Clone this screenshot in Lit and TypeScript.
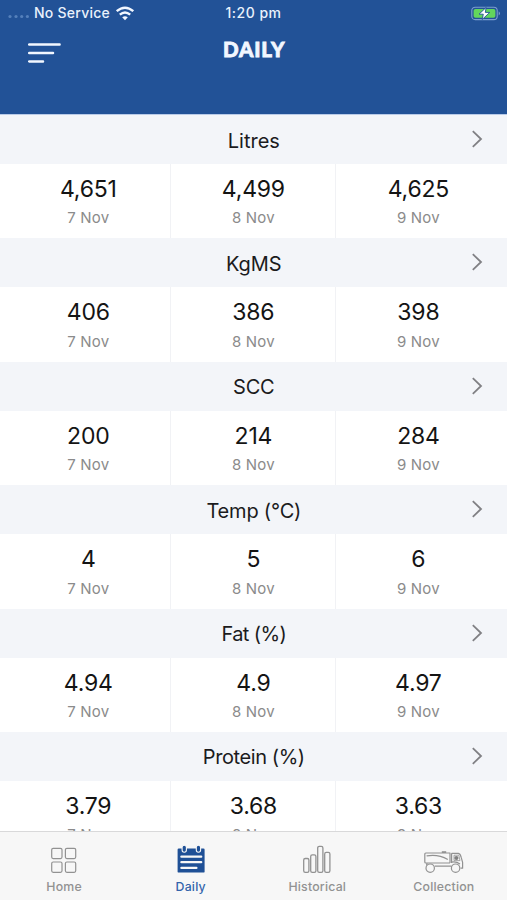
import { LitElement, html, css, svg } from "lit";
import { customElement, property } from "lit/decorators.js";
import { classMap } from "lit/directives/class-map.js";
import { styleMap } from "lit/directives/style-map.js";

interface Metric {
  name: string;
  tracking: number;
  values: string[];
}

const DAYS = ["7 Nov", "8 Nov", "9 Nov"];

const METRICS: Metric[] = [
  { name: "Litres", tracking: 0, values: ["4,651", "4,499", "4,625"] },
  { name: "KgMS", tracking: 0, values: ["406", "386", "398"] },
  { name: "SCC", tracking: -0.2, values: ["200", "214", "284"] },
  { name: "Temp (°C)", tracking: -0.2, values: ["4", "5", "6"] },
  { name: "Fat (%)", tracking: -0.6, values: ["4.94", "4.9", "4.97"] },
  { name: "Protein (%)", tracking: -0.42, values: ["3.79", "3.68", "3.63"] },
];

const homeIcon = svg`<g fill="none" stroke="#929292" stroke-width="1.2">
  <rect x="9.7" y="4.3" width="10.3" height="10.3" rx="1.5"/>
  <rect x="23.4" y="4.3" width="10.3" height="10.3" rx="1.5"/>
  <rect x="9.7" y="18" width="10.3" height="10.3" rx="1.5"/>
  <rect x="23.4" y="18" width="10.3" height="10.3" rx="1.5"/></g>`;

const dailyIcon = svg`<rect x="8.6" y="4.6" width="27" height="24" rx="1.2" fill="#1f5096"/>
  <g stroke="#f7f7f7" stroke-width="2.3" stroke-linecap="round">
  <path d="M12.4 12.7H32.2M12.4 18.2H32.2M12.4 23.9H27.4"/></g>
  <g fill="#1f5096" stroke="#f7f7f7" stroke-width="1.1">
  <rect x="13.1" y="1.2" width="4.3" height="7" rx="2.1"/>
  <rect x="27.3" y="1.2" width="4.3" height="7" rx="2.1"/></g>`;

const historicalIcon = svg`<g fill="none" stroke="#929292" stroke-width="1.3">
  <rect x="8.7" y="14.5" width="5.2" height="13.8" rx="1.6"/>
  <rect x="15.7" y="10.8" width="5.2" height="17.5" rx="1.6"/>
  <rect x="22.7" y="2.3" width="5.2" height="26" rx="1.6"/>
  <rect x="29.7" y="8.3" width="5.2" height="20" rx="1.6"/></g>`;

const collectionIcon = svg`<g fill="none" stroke="#929292" stroke-width="1.2" stroke-linejoin="round">
  <path d="M28 19H3.8Q2.8 19 2.8 18V10Q2.8 9 3.8 9H28V19"/>
  <path d="M29.6 9.3H36.4Q38.4 9.6 39.2 13.4L40.6 18.4V24.2H38.6"/>
  <path d="M29.6 9.3V19M5 19L4.6 21.4M12.8 22.2H29.4M29.6 18.2Q34 17.2 38 20"/>
  <path d="M4.6 11.9C11 10.7 18.4 11.2 25.8 15.4"/>
  <path d="M19.8 8.1H24.2" stroke-width="1.8"/>
  <path d="M32 11.2H36.8L38 16.6H32Z" stroke-width="0.8"/>
  <circle cx="34.4" cy="14" r="2.1" fill="#808080" stroke="none"/>
  <circle cx="8.2" cy="24.2" r="4.2"/>
  <circle cx="33.6" cy="24.2" r="4.2"/></g>`;

@customElement("status-bar")
export class StatusBar extends LitElement {
  static styles = css`
    :host { display: grid; grid-template-columns: 1fr auto 1fr; align-items: center; height: 26px;
      color: #e9f1fc; font-size: 14px; font-weight: 500; line-height: 26px; }
    .carrier { display: flex; align-items: center; padding-left: 8px; }
    .dots { width: 22px; height: 5px; margin: 7px 4px 0 0; }
    .wifi { width: 20px; height: 15px; margin-left: 5px; }
    .label { letter-spacing: 0.25px; }
    .time { letter-spacing: 0.5px; }
    .power { display: flex; justify-content: flex-end; padding-right: 6px; }
    .battery { width: 30px; height: 15px; }
  `;
  render() {
    return html`
      <div class="carrier">
        <svg class="dots" viewBox="0 0 22 5" fill="#5580bb">
          <circle cx="2" cy="2.5" r="1.6"/><circle cx="8" cy="2.5" r="1.6"/>
          <circle cx="13.7" cy="2.5" r="1.6"/><circle cx="19.4" cy="2.5" r="1.6"/>
        </svg>
        <span class="label">No Service</span>
        <svg class="wifi" viewBox="0 0 20 15" fill="none" stroke="#f2f7ff" stroke-width="2.4">
          <path d="M1.7 5.2Q10 -1.8 18.3 5.2M4.8 8.7Q10 4.2 15.2 8.7"/>
          <path d="M10 14.2L7.2 11.3Q10 9 12.8 11.3Z" fill="#f2f7ff" stroke="none"/>
        </svg>
      </div>
      <span class="time">1:20 pm</span>
      <div class="power">
        <svg class="battery" viewBox="0 0 30 15">
          <rect x="0.8" y="1.2" width="25.4" height="12.4" rx="3.4" fill="none" stroke="#7e9fce" stroke-width="1.1"/>
          <path d="M27.7 5.2Q30.2 7.4 27.7 9.6Z" fill="#7e9fce"/>
          <rect x="2.6" y="3" width="21.8" height="8.8" rx="1.8" fill="#63d65c"/>
          <path d="M15.2 1.4L8 8.2H12.3L11.2 13.5L18.8 6.4H14.3Z" fill="#fff" stroke="#225297" stroke-width="0.9"/>
        </svg>
      </div>`;
  }
}

@customElement("metric-section")
export class MetricSection extends LitElement {
  @property({ attribute: false }) metric!: Metric;
  static styles = css`
    :host { display: block; flex: none; height: 123.4px; }
    .head { display: grid; grid-template-columns: 1fr auto 1fr; align-items: center; height: 49px;
      background: #f3f5f9; }
    .name { grid-column: 2; font-size: 20px; line-height: 24px; padding: 2px 0 0 0.6px; color: #1b1b1d; }
    .chevron { justify-self: end; width: 12px; height: 18px; margin: 0 24px 0.8px 0; }
    .row { display: grid; grid-template-columns: repeat(3, 165px); height: 74.4px; padding-left: 5.4px; background: #fff; }
    .cell { display: flex; flex-direction: column; align-items: center; padding: 11px 0 0 0.8px; }
    .cell + .cell { border-left: 1px solid #f1f2f5; padding-left: 0; }
    .value { font-size: 23px; line-height: 28px; color: #141414; letter-spacing: -0.2px; }
    .day { font-size: 15px; line-height: 20px; margin-top: 5.4px; color: #8b8b8b; letter-spacing: 0.2px; }
  `;
  render() {
    return html`
      <div class="head">
        <span class="name" style=${styleMap({ letterSpacing: `${this.metric.tracking}px` })}>${this.metric.name}</span>
        <svg class="chevron" viewBox="0 0 12 18" fill="none" stroke="#808084" stroke-width="1.8">
          <path d="M1.8 1.2L10 9L1.8 16.8"/>
        </svg>
      </div>
      <div class="row">
        ${this.metric.values.map((v, i) => html`
          <div class="cell"><span class="value">${v}</span><span class="day">${DAYS[i]}</span></div>`)}
      </div>`;
  }
}

@customElement("tab-bar")
export class TabBar extends LitElement {
  static styles = css`
    :host { display: grid; grid-template-columns: repeat(4, 126.6px); height: 68px; padding-left: 0.8px;
      border-top: 1px solid #d9d9da; background: #f7f7f7; }
    .tab { display: flex; flex-direction: column; align-items: center; padding-top: 12px; color: #929292;
      font-size: 12.3px; font-weight: 500; line-height: 16px; letter-spacing: 0.2px; }
    .active { color: #3264ab; }
    .icon { width: 44px; height: 32px; margin-bottom: 3px; }
  `;
  render() {
    const tabs = [
      { label: "Home", icon: homeIcon },
      { label: "Daily", icon: dailyIcon, active: true },
      { label: "Historical", icon: historicalIcon },
      { label: "Collection", icon: collectionIcon },
    ];
    return html`${tabs.map((t) => html`
      <div class=${classMap({ tab: true, active: !!t.active })}>
        <svg class="icon" viewBox="0 0 44 32">${t.icon}</svg>
        <span>${t.label}</span>
      </div>`)}`;
  }
}

@customElement("app-root")
export class AppRoot extends LitElement {
  static styles = css`
    :host { display: flex; flex-direction: column; width: 507px; height: 900px; overflow: hidden;
      font-family: Inter, "Liberation Sans", sans-serif; background: #fff; }
    .top { flex: none; box-sizing: border-box; height: 115px; background: #225297; border-bottom: 1px solid #b9cbe8; }
    .nav { display: grid; grid-template-columns: 1fr auto 1fr; padding: 12px 28px 0; }
    .menu { width: 34px; height: 24px; margin-top: 3px; }
    .title { font-family: Lato, "Open Sans", sans-serif; font-size: 20.5px; font-weight: 900; line-height: 22px;
      letter-spacing: 0.9px; padding-left: 1.4px; color: #f2f7ff; -webkit-text-stroke: 0.8px #f2f7ff; }
    .list { flex: 1; min-height: 0; overflow: hidden; display: flex; flex-direction: column; }
  `;
  render() {
    return html`
      <div class="top">
        <status-bar></status-bar>
        <div class="nav">
          <svg class="menu" viewBox="0 0 34 24" stroke="#f2f7ff" stroke-width="2.5" stroke-linecap="round">
            <path d="M1.2 3.6H31.6M1.2 12.1H25M1.2 20.4H15"/>
          </svg>
          <span class="title">DAILY</span>
        </div>
      </div>
      <div class="list">
        ${METRICS.map((m) => html`<metric-section .metric=${m}></metric-section>`)}
      </div>
      <tab-bar></tab-bar>`;
  }
}
